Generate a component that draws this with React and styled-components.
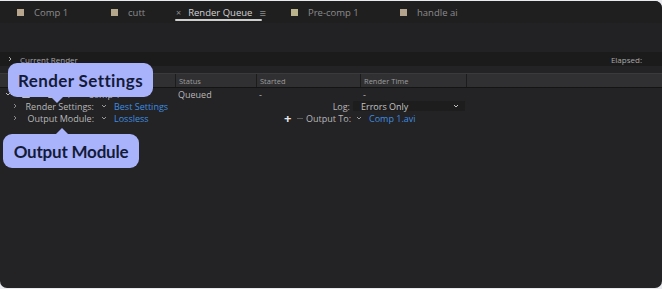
import React from 'react';
import styled, { createGlobalStyle } from 'styled-components';

const GlobalStyle = createGlobalStyle`
    html, body {
        margin: 0;
        padding: 0;
        background: #e8eaee;
    }
    body {
        font-family: "Open Sans", "Noto Sans", sans-serif;
    }
`;

const Frame = styled.div`
    position: relative;
    margin-top: 1px;
    width: 662px;
    height: 287px;
    background: #232225;
    border-radius: 0 7px 7px 7px;
    overflow: hidden;
    color: #b4b4b4;
    font-size: 9px;
    white-space: nowrap;
`;

const TabBar = styled.div`
    display: flex;
    align-items: center;
    height: 22px;
    padding-left: 17px;
    background: #1f1f20;
`;

const Tab = styled.div`
    display: flex;
    align-items: center;
    gap: 10px;
    width: ${p => p.width}px;
    height: 100%;
    font-size: 9.5px;
    color: #8c8c8c;
`;

const Swatch = styled.span`
    width: 7px;
    height: 7px;
    background: ${p => p.color};
`;

const ActiveTab = styled.div`
    display: flex;
    align-items: center;
    gap: 7px;
    height: 100%;
    width: ${p => p.width}px;
    font-size: 9.5px;
    color: #d2d2d2;
    position: relative;

    &::after {
        content: '';
        position: absolute;
        left: -1px;
        bottom: 2px;
        width: 87px;
        height: 2px;
        border-radius: 1px;
        background: #cfcfcf;
    }
`;

const Dim = styled.span`
    color: #8c8c8c;
    font-size: ${p => p.size || 9}px;
`;

const Toolbar = styled.div`
    height: 29px;
    background: #222123;
`;

const SectionBar = styled.div`
    display: flex;
    align-items: center;
    justify-content: space-between;
    height: 14px;
    padding: 0 20px 0 7px;
    background: #1b1b1c;
    font-size: 8px;
    color: #a8a8a8;
`;

const SectionTitle = styled.div`
    display: flex;
    align-items: center;
    gap: 7px;
`;

const HeaderRow = styled.div`
    display: flex;
    align-items: center;
    margin-top: 7px;
    height: 13px;
    background: #303032;
    border-top: 1px solid #3a3a3c;
    border-bottom: 1px solid #141415;
    padding-left: 175px;
    font-size: 7.5px;
    color: #9c9c9c;
`;

const HeaderCell = styled.div`
    width: ${p => p.width}px;
    height: 100%;
    display: flex;
    align-items: center;
    padding-left: 3px;
    box-sizing: border-box;
    border-left: 1px solid #1c1c1d;
`;

const ItemRow = styled.div`
    display: flex;
    align-items: center;
    height: 12px;
    color: #b8b8b8;
`;

const Cell = styled.div`
    width: ${p => p.width}px;
    flex: none;
    display: flex;
    align-items: center;
    gap: ${p => p.gap || 0}px;
    padding-left: ${p => p.pad || 0}px;
    box-sizing: border-box;
`;

const Check = styled.span`
    width: 8px;
    height: 8px;
    background: #bdbdbd;
    border-radius: 1px;
`;

const SubRow = styled.div`
    display: flex;
    align-items: center;
    height: 12px;
    color: #b0b0b0;
`;

const Twisty = styled.span`
    width: ${p => p.width}px;
    flex: none;
    display: flex;
    justify-content: flex-end;
    padding-right: 6px;
    box-sizing: border-box;
    color: #8a8a8a;
`;

const Label = styled.span`
    width: ${p => p.width}px;
    flex: none;
    text-align: right;
    color: #b8b8b8;
`;

const Chevron = styled.span`
    width: 20px;
    flex: none;
    display: flex;
    justify-content: center;
    color: #9a9a9a;
`;

const Link = styled.span`
    color: #3d8ee0;
    width: ${p => (p.width ? `${p.width}px` : 'auto')};
    flex: none;
`;

const Select = styled.div`
    width: 112px;
    height: 10px;
    margin-left: 3px;
    background: #1d1d1e;
    display: flex;
    align-items: center;
    justify-content: space-between;
    padding: 0 6px 0 8px;
    box-sizing: border-box;
    color: #c4c4c4;
`;

const Plus = styled.span`
    width: 9px;
    flex: none;
    color: #e6e6e6;
    font-size: 13px;
    font-weight: 700;
    line-height: 1;
`;

const Dash = styled.span`
    width: 6px;
    height: 1px;
    margin: 0 3px 0 4px;
    flex: none;
    background: #5a5a5a;
`;

const Bubble = styled.div`
    position: absolute;
    left: ${p => p.x}px;
    top: ${p => p.y}px;
    width: ${p => p.width}px;
    height: 34px;
    display: flex;
    align-items: center;
    justify-content: center;
    background: #a9b3fb;
    border-radius: 9px;
    font-family: "Lato", "Inter", sans-serif;
    font-weight: 700;
    font-size: 17px;
    color: #141b3a;
    letter-spacing: ${p => p.track}px;

    &::after {
        content: '';
        position: absolute;
        left: ${p => p.tip}px;
        ${p => (p.up ? 'top: -6px;' : 'bottom: -6px;')}
        border-left: 6px solid transparent;
        border-right: 6px solid transparent;
        ${p => (p.up ? 'border-bottom: 6px solid #a9b3fb;' : 'border-top: 6px solid #a9b3fb;')}
    }
`;

const ChevronIcon = ({ dir = 'down' }) => (
    <svg width="6" height="6" viewBox="0 0 6 6" fill="none" stroke="currentColor" strokeWidth="1">
        {dir === 'down' ? <path d="M1 2l2 2 2-2" /> : <path d="M2 1l2 2-2 2" />}
    </svg>
);

const tabs = [
    { label: 'Comp 1', color: '#b9a68f', width: 94 },
    { label: 'cutt', color: '#b5a78c', width: 65 },
];

const tabsAfter = [
    { label: 'Pre-comp 1', color: '#bab38b', width: 109 },
    { label: 'handle ai', color: '#b4a38d', width: 90 },
];

const App = () => (
    <>
        <GlobalStyle />
        <Frame>
            <TabBar>
                {tabs.map(t => (
                    <Tab key={t.label} width={t.width}>
                        <Swatch color={t.color} />
                        {t.label}
                    </Tab>
                ))}
                <ActiveTab width={115}>
                    <Dim size={9}>×</Dim>
                    Render Queue
                    <Dim size={11}>≡</Dim>
                </ActiveTab>
                {tabsAfter.map(t => (
                    <Tab key={t.label} width={t.width}>
                        <Swatch color={t.color} />
                        {t.label}
                    </Tab>
                ))}
            </TabBar>
            <Toolbar />
            <SectionBar>
                <SectionTitle>
                    <ChevronIcon dir="right" />
                    Current Render
                </SectionTitle>
                <span>Elapsed:</span>
            </SectionBar>
            <HeaderRow>
                <HeaderCell width={81}>Status</HeaderCell>
                <HeaderCell width={104}>Started</HeaderCell>
                <HeaderCell width={106}>Render Time</HeaderCell>
                <HeaderCell width={10} />
            </HeaderRow>
            <ItemRow>
                <Cell width={22} pad={5}><ChevronIcon /></Cell>
                <Cell width={26}><Check /></Cell>
                <Cell width={40} gap={10}><Check />1</Cell>
                <Cell width={90}>Comp 1</Cell>
                <Cell width={81}>Queued</Cell>
                <Cell width={104}>-</Cell>
                <Cell width={100}>-</Cell>
            </ItemRow>
            <SubRow>
                <Twisty width={24}><ChevronIcon dir="right" /></Twisty>
                <Label width={70}>Render Settings:</Label>
                <Chevron><ChevronIcon /></Chevron>
                <Link width={204}>Best Settings</Link>
                <Label width={32}>Log:</Label>
                <Select>
                    Errors Only
                    <ChevronIcon />
                </Select>
            </SubRow>
            <SubRow>
                <Twisty width={24}><ChevronIcon dir="right" /></Twisty>
                <Label width={70}>Output Module:</Label>
                <Chevron><ChevronIcon /></Chevron>
                <Link width={170}>Lossless</Link>
                <Plus>+</Plus>
                <Dash />
                <Label width={43}>Output To:</Label>
                <Chevron><ChevronIcon /></Chevron>
                <Link>Comp 1.avi</Link>
            </SubRow>
            <Bubble x={8} y={62} width={145} track={0.4} tip={43}>Render Settings</Bubble>
            <Bubble x={3} y={133} width={136} track={-0.2} tip={53} up>Output Module</Bubble>
        </Frame>
    </>
);

export default App;
